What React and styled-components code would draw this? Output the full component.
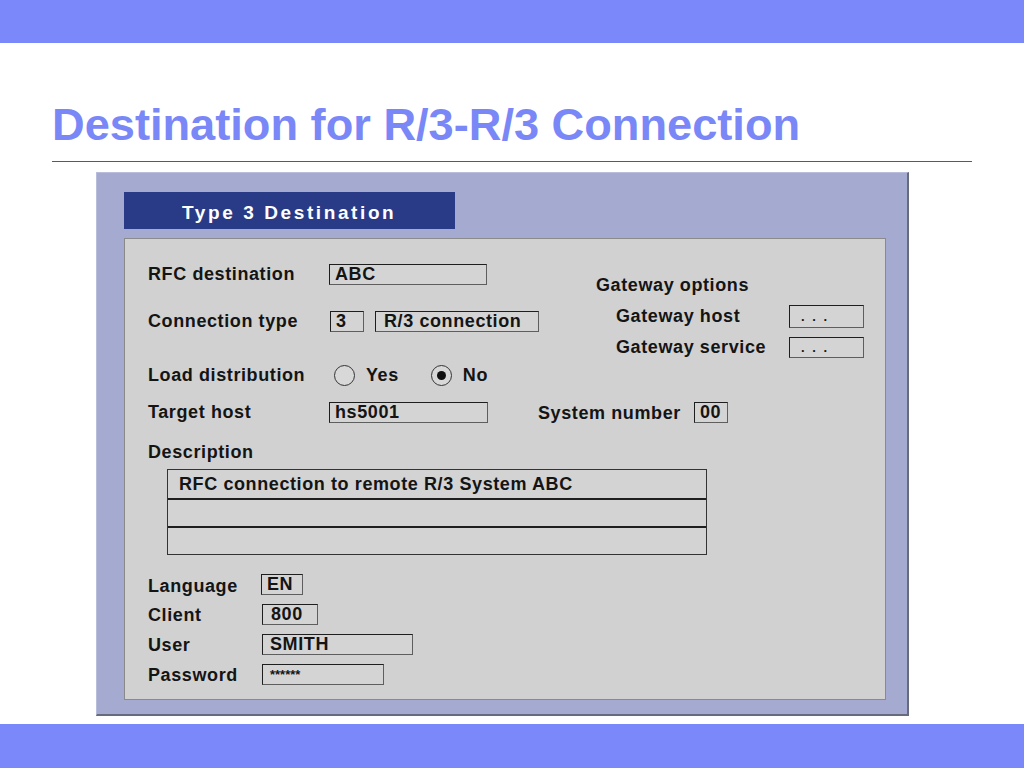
import React from "react";
import styled, { createGlobalStyle } from "styled-components";

const GlobalStyle = createGlobalStyle`
  html, body {
    margin: 0;
    padding: 0;
    background: #ffffff;
  }
  body {
    font-family: "Liberation Sans", Arial, sans-serif;
  }
`;

const Page = styled.div`
  width: 1024px;
  min-height: 768px;
  display: flex;
  flex-direction: column;
  background: #fff;
`;

const Bar = styled.div`
  height: ${(props) => props.h}px;
  background: #7b88fa;
  flex-shrink: 0;
`;

const BottomBar = styled(Bar)`
  margin-top: auto;
`;

const Title = styled.h1`
  margin: 56px 0 0 52px;
  font-family: "Liberation Sans", Arial, sans-serif;
  font-weight: bold;
  font-size: 45.2px;
  line-height: 51px;
  color: #7a87f7;
`;

const Rule = styled.div`
  margin: 11px 0 0 52px;
  width: 920px;
  height: 1px;
  background: #5a5a5a;
`;

const Frame = styled.div`
  margin: 10px 0 0 96px;
  width: 810px;
  height: 541px;
  background: #a4aad0;
  border-top: 1px solid #b8bddb;
  border-left: 1px solid #b8bddb;
  border-right: 2px solid #666b7e;
  border-bottom: 2px solid #666b7e;
  display: flex;
  flex-direction: column;
`;

const Tab = styled.div`
  margin: 19px 0 0 27px;
  width: 331px;
  height: 37px;
  box-sizing: border-box;
  padding: 4px 0 0 58px;
  display: flex;
  align-items: center;
  background: #293b86;
  color: #fff;
  font-family: "Liberation Sans", Arial, sans-serif;
  font-weight: bold;
  font-size: 19px;
  letter-spacing: 2.6px;
`;

const Form = styled.div`
  margin: 9px 21px 14px 27px;
  flex: 1;
  background: #d1d1d1;
  border: 1px solid #8a8a8a;
  padding: 0 0 0 23px;
  color: #141414;
  font-family: "Liberation Sans", Arial, sans-serif;
  font-weight: bold;
  font-size: 18px;
  letter-spacing: 0.6px;
`;

const Top = styled.div`
  display: flex;
  align-items: flex-start;
`;

const LeftCol = styled.div`
  width: 448px;
  flex-shrink: 0;
`;

const GatewayCol = styled.div`
  padding-top: 35px;
`;

const Row = styled.div`
  display: flex;
  align-items: center;
  height: ${(props) => props.h || 22}px;
  margin-top: ${(props) => props.mt || 0}px;
  margin-left: ${(props) => props.indent || 0}px;
`;

const Label = styled.span`
  width: ${(props) => props.w || 181}px;
  margin-left: ${(props) => props.ml || 0}px;
  padding-top: ${(props) => props.pt || 0}px;
  flex-shrink: 0;
  white-space: nowrap;
`;

const Field = styled.div`
  box-sizing: border-box;
  width: ${(props) => props.w}px;
  height: ${(props) => props.h || 21}px;
  margin-left: ${(props) => props.ml || 0}px;
  padding-left: ${(props) => props.pl ?? 5}px;
  display: flex;
  align-items: center;
  border-top: 1px solid #1e1e1e;
  border-left: 1px solid #1e1e1e;
  border-right: 1px solid #5e5e5e;
  border-bottom: 1px solid #5e5e5e;
  background: #d4d4d4;
  font-size: ${(props) => props.fs || 18}px;
  letter-spacing: ${(props) => props.ls ?? 0.6}px;
  white-space: nowrap;
  flex-shrink: 0;
`;

const Radio = styled.span`
  box-sizing: border-box;
  width: 21px;
  height: 21px;
  border-radius: 50%;
  border: 1px solid #333;
  background: #d8d8d8;
  margin-left: ${(props) => props.ml}px;
  display: flex;
  align-items: center;
  justify-content: center;
  flex-shrink: 0;
  &::after {
    content: "";
    display: ${(props) => (props.checked ? "block" : "none")};
    width: 9px;
    height: 9px;
    border-radius: 50%;
    background: #111;
  }
`;

const RadioText = styled.span`
  margin-left: 11px;
`;

const DescTable = styled.div`
  margin: 6px 0 0 19px;
  width: 540px;
  border: 1px solid #333;
  box-sizing: border-box;
  background: #d3d3d3;
`;

const DescRow = styled.div`
  height: 28px;
  box-sizing: border-box;
  padding-left: 11px;
  display: flex;
  align-items: center;
  & + & {
    border-top: 2px solid #1e1e1e;
  }
`;

export default function App() {
  return (
    <Page>
      <GlobalStyle />
      <Bar h={43} />
      <Title>Destination for R/3-R/3 Connection</Title>
      <Rule />
      <Frame>
        <Tab>Type 3 Destination</Tab>
        <Form>
          <Top>
            <LeftCol>
              <Row mt={24}>
                <Label>RFC destination</Label>
                <Field w={158}>ABC</Field>
              </Row>
              <Row mt={25}>
                <Label>Connection type</Label>
                <Field w={34} ml={1}>3</Field>
                <Field w={164} ml={11} pl={8}>R/3 connection</Field>
              </Row>
              <Row mt={32}>
                <Label>Load distribution</Label>
                <Radio ml={5} />
                <RadioText>Yes</RadioText>
                <Radio ml={32} checked />
                <RadioText>No</RadioText>
              </Row>
            </LeftCol>
            <GatewayCol>
              <Row>
                <span>Gateway options</span>
              </Row>
              <Row mt={9} h={23} indent={20}>
                <Label w={173}>Gateway host</Label>
                <Field w={75} h={23} pl={11} fs={13} ls={2}>. . .</Field>
              </Row>
              <Row mt={8} indent={20}>
                <Label w={173}>Gateway service</Label>
                <Field w={75} pl={11} fs={13} ls={2}>. . .</Field>
              </Row>
            </GatewayCol>
          </Top>
          <Row mt={15}>
            <Label>Target host</Label>
            <Field w={159}>hs5001</Field>
            <Label w={156} ml={50} pt={3}>System number</Label>
            <Field w={34}>00</Field>
          </Row>
          <Row mt={18}>
            <Label>Description</Label>
          </Row>
          <DescTable>
            <DescRow>RFC connection to remote R/3 System ABC</DescRow>
            <DescRow />
            <DescRow />
          </DescTable>
          <Row mt={18}>
            <Label w={113} pt={4}>Language</Label>
            <Field w={42}>EN</Field>
          </Row>
          <Row mt={8}>
            <Label w={114} pt={3}>Client</Label>
            <Field w={56} pl={8}>800</Field>
          </Row>
          <Row mt={8}>
            <Label w={114} pt={3}>User</Label>
            <Field w={151} pl={7}>SMITH</Field>
          </Row>
          <Row mt={8}>
            <Label w={114} pt={3}>Password</Label>
            <Field w={122} pl={7} fs={13} ls={0}>******</Field>
          </Row>
        </Form>
      </Frame>
      <BottomBar h={44} />
    </Page>
  );
}
